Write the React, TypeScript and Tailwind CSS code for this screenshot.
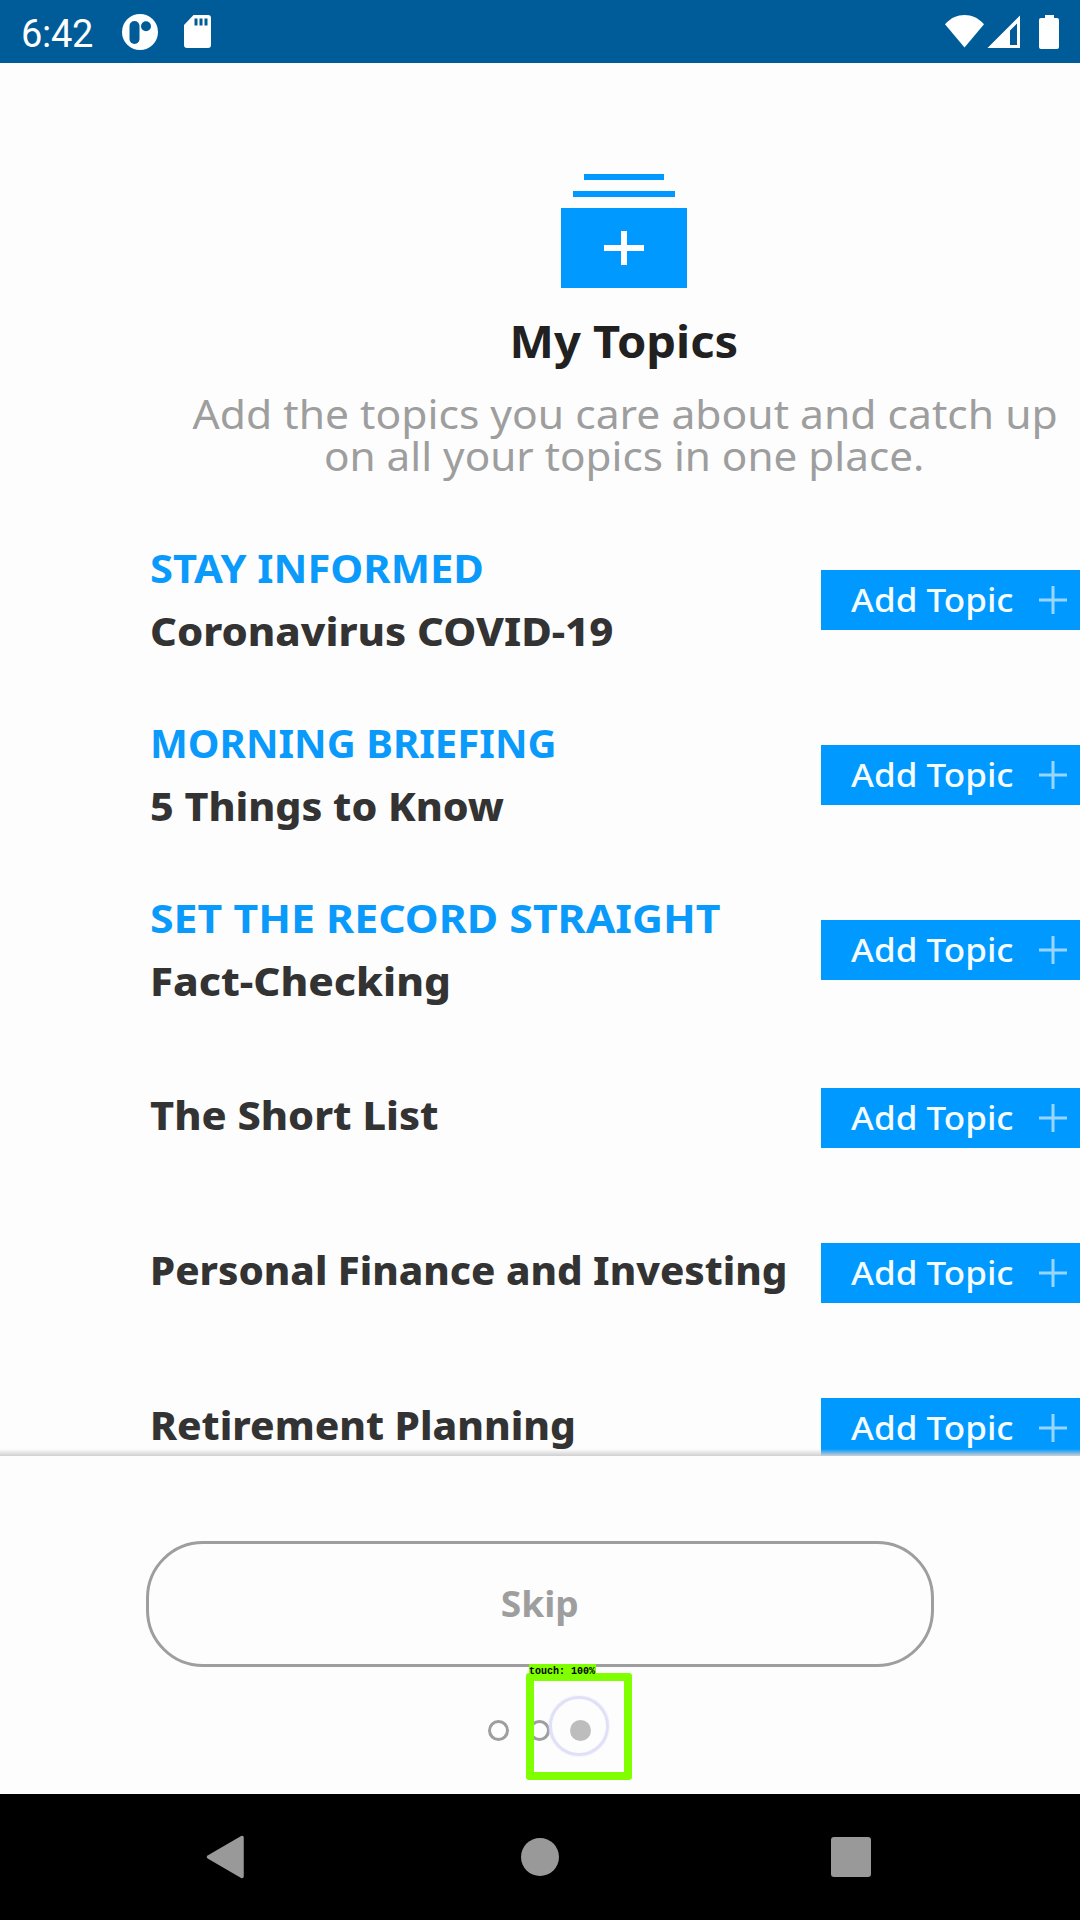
import React from 'react';

type Topic = { title: string; titleClass: string; label?: string; labelClass?: string };

const topics: Topic[] = [
  { label: 'STAY INFORMED', labelClass: 'scale-x-[1.042]', title: 'Coronavirus COVID-19', titleClass: 'scale-x-[1.044]' },
  { label: 'MORNING BRIEFING', labelClass: 'scale-x-[1.003]', title: '5 Things to Know', titleClass: 'scale-x-[1.027]' },
  { label: 'SET THE RECORD STRAIGHT', labelClass: 'scale-x-[1.071]', title: 'Fact-Checking', titleClass: 'scale-x-[1.055]' },
  { title: 'The Short List', titleClass: 'scale-x-[1.036]' },
  { title: 'Personal Finance and Investing', titleClass: 'scale-x-[1.006]' },
  { title: 'Retirement Planning', titleClass: 'scale-x-[1.014]' },
];

function StatusBar() {
  return (
    <header className="flex h-[63px] shrink-0 items-center bg-[#005c99] pl-[21px] pr-[21px] text-white">
      <span className="w-[101px] pt-[4px] font-['Roboto'] text-[38px] leading-[60px] tracking-[-0.3px]">6:42</span>
      <svg className="h-[36px] w-[36px]" viewBox="0 0 36 36">
        <circle cx="18" cy="18" r="18" fill="#fff" />
        <rect x="7.5" y="7" width="10" height="23" rx="5" fill="#005c99" />
        <circle cx="24" cy="12.2" r="5" fill="#005c99" />
      </svg>
      <svg className="ml-[26px] h-[33px] w-[27px]" viewBox="0 0 27 33">
        <path d="M9.5 0H24a3 3 0 0 1 3 3v27a3 3 0 0 1-3 3H3a3 3 0 0 1-3-3V10z" fill="#fff" />
        <path d="M10.5 3.5h3v7h-3zM15.5 3.5h3v7h-3zM20.5 3.5h3v7h-3z" fill="#005c99" />
      </svg>
      <svg className="ml-auto h-[34px] w-[114px]" viewBox="0 0 114 34">
        <path d="M0 9.2C11-3 28-3 39 9.2L19.5 32.5z" fill="#fff" />
        <path fillRule="evenodd" d="M75 .5V33H42.5zM72 8.5L65 15.500V30h7z" fill="#fff" />
        <path d="M100 0h9v3h3a2 2 0 0 1 2 2v27a2 2 0 0 1-2 2H96a2 2 0 0 1-2-2V5a2 2 0 0 1 2-2h4z" fill="#fff" />
      </svg>
    </header>
  );
}

function StackIcon() {
  return (
    <svg className="h-[115px] w-[126px] shrink-0" viewBox="0 0 126 115" shapeRendering="crispEdges">
      <path d="M23 1h80v6H23zM12 18h102v6H12zM0 35h126v80H0z" fill="#0099ff" />
      <path d="M43 72h40v6H43zM60 58h6v34h-6z" fill="#fff" />
    </svg>
  );
}

function AddButton({ className }: { className: string }) {
  return (
    <button className={`flex h-[60px] w-[277px] shrink-0 items-center bg-[#0099ff] pl-[30px] text-[#f5fcff] ${className}`}>
      <span className="w-[188px] text-left text-[32px] font-medium leading-[60px]">
        <span className="inline-block origin-left scale-x-[1.095]">Add Topic</span>
      </span>
      <svg className="h-[28px] w-[28px]" viewBox="0 0 28 28">
        <path d="M0 14h28M14 0v28" stroke="#fff" strokeOpacity=".6" strokeWidth="3" />
      </svg>
    </button>
  );
}

function TopicRow({ topic }: { topic: Topic }) {
  return (
    <li className={`flex items-start justify-between pl-[66px] pr-[66px] ${topic.label ? 'h-[175px]' : 'h-[155px]'}`}>
      <div className="flex flex-col items-start whitespace-nowrap text-[40px] leading-[63px]">
        {topic.label && <p className={`origin-left font-bold text-[#0a9afb] ${topic.labelClass}`}>{topic.label}</p>}
        <p className={`origin-left font-extrabold text-[#333333] ${topic.titleClass}`}>{topic.title}</p>
      </div>
      <AddButton className={topic.label ? 'mt-[34px]' : 'mt-[5px]'} />
    </li>
  );
}

function TouchMarker() {
  return (
    <div className="absolute left-[526px] top-[217px] h-[107px] w-[106px]">
      <div className="h-full w-full rounded-[3px] border-8 border-[#80ff00]" />
      <div className="absolute left-[23px] top-[23px] h-[60px] w-[60px] rounded-full border-[3px] border-[#e0e0f8] shadow-[0_0_2px_#e0e0f8]" />
      <span className="absolute left-[3px] top-[-9px] h-[13px] w-[67px] whitespace-pre bg-[#80ff00] font-['Liberation_Mono'] text-[10px] font-bold leading-[15px] text-black">
        touch: 100%
      </span>
    </div>
  );
}

export default function App() {
  return (
    <div className="flex h-[1920px] w-[1080px] flex-col overflow-hidden bg-[#fdfdfd] font-['Noto_Sans',sans-serif]">
      <StatusBar />
      <main className="relative h-[1393px] shrink-0 overflow-hidden">
        <div className="ml-[84px] flex w-[1080px] flex-col items-center pt-[110px]">
          <StackIcon />
          <h1 className="mt-[23px] scale-x-[1.07] text-[44px] font-bold leading-[60px] text-[#212121]">My Topics</h1>
          <p className="mt-[22px] whitespace-nowrap text-center text-[40px] leading-[42px] text-[#9e9e9e]">
            <span className="block translate-x-px scale-x-[1.065]">Add the topics you care about and catch up</span>
            <span className="block scale-x-[1.056]">on all your topics in one place.</span>
          </p>
          <ul className="mt-[59px] w-full">
            {topics.slice(0, 3).map((t) => <TopicRow key={t.title} topic={t} />)}
          </ul>
          <ul className="mt-[22px] w-full">
            {topics.slice(3).map((t) => <TopicRow key={t.title} topic={t} />)}
          </ul>
        </div>
        <div className="absolute inset-x-0 bottom-0 h-[7px] bg-gradient-to-b from-[#d0d0d0]/0 to-[#d0d0d0]" />
      </main>
      <footer className="relative flex h-[338px] shrink-0 flex-col items-center bg-[#fdfdfd] pt-[85px]">
        <button className="h-[126px] w-[788px] rounded-[57px] border-[3px] border-[#9e9e9e] text-[35px] font-bold leading-[118px] text-[#9e9e9e]">
          <span className="inline-block scale-x-[1.06]">Skip</span>
        </button>
        <div className="mt-[53px] flex gap-5 pr-[2px]">
          <span className="h-[21px] w-[21px] rounded-full border-[3px] border-[#9e9e9e]" />
          <span className="h-[21px] w-[21px] rounded-full border-[3px] border-[#9e9e9e]" />
          <span className="h-[21px] w-[21px] rounded-full bg-[#bdbdbd]" />
        </div>
        <TouchMarker />
      </footer>
      <nav className="flex h-[126px] shrink-0 items-center justify-between bg-black pl-[206px] pr-[209px]">
        <svg className="h-[44px] w-[38px]" viewBox="0 0 38 44">
          <path d="M36 2.500V41.500L2.500 22z" fill="#999" stroke="#999" strokeWidth="3.500" strokeLinejoin="round" />
        </svg>
        <span className="ml-[5px] h-[38px] w-[38px] rounded-full bg-[#999]" />
        <span className="h-[40px] w-[40px] rounded-[3px] bg-[#999]" />
      </nav>
    </div>
  );
}
